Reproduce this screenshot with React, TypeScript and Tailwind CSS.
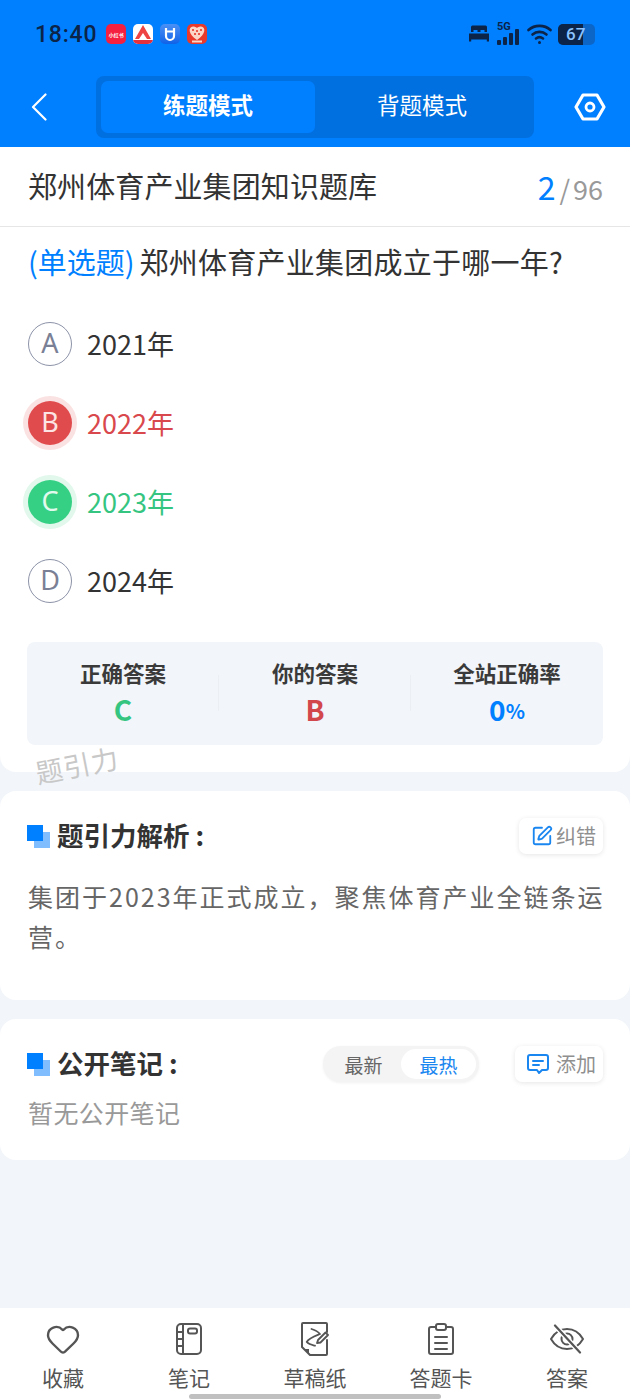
import React from 'react'
import { Heart, SquarePen } from 'lucide-react'

const FONT = "font-['Noto_Sans_CJK_SC','Noto_Sans',sans-serif]"

const AppBadge: React.FC<{ className: string; children: React.ReactNode }> = ({ className, children }) => (
    <div className={`w-5 h-5 rounded-[5px] flex items-center justify-center overflow-hidden ${className}`}>{children}</div>
)

const StatusBar: React.FC = () => (
    <div className="h-[68px] flex items-start justify-between pl-[35px] pr-[35px] pt-[20px]">
        <div className="flex items-center gap-[9px] h-[28px]">
            <span className="text-[23px] leading-none font-['Roboto',sans-serif] font-medium text-[#0b2448] tracking-[0.8px]">18:40</span>
            <div className="flex items-center gap-[7px]">
                <AppBadge className="bg-[#f5203f]">
                    <span className="text-[5px] leading-none text-white font-bold whitespace-nowrap">小红书</span>
                </AppBadge>
                <AppBadge className="bg-white">
                    <svg width="20" height="20" viewBox="0 0 20 20">
                        <path d="M10 1 L18 15 L14 15 L10 9 L6 15 L2 15 Z" fill="#ef4444" />
                        <rect x="0" y="16" width="20" height="4" fill="#e5313c" />
                    </svg>
                </AppBadge>
                <AppBadge className="bg-linear-to-b from-[#4a90f5] to-[#0f62e8]">
                    <svg width="20" height="20" viewBox="0 0 20 20" fill="none" stroke="white" strokeWidth="2.2">
                        <path d="M6 4 V12 A4 4 0 0 0 14 12 V4" />
                        <path d="M6 7.5 H14" />
                    </svg>
                </AppBadge>
                <AppBadge className="bg-[#e8392b]">
                    <svg width="20" height="20" viewBox="0 0 20 20">
                        <path d="M10 16 C1 10 1 3 6 2.5 C8.3 2.3 10 4 10 4 C10 4 11.7 2.3 14 2.5 C19 3 19 10 10 16 Z" fill="#fbd5c5" />
                        <circle cx="6" cy="6" r="1.1" fill="#e8392b" />
                        <circle cx="10" cy="7" r="1.1" fill="#e8392b" />
                        <circle cx="14" cy="6" r="1.1" fill="#e8392b" />
                        <circle cx="8" cy="10" r="1.1" fill="#e8392b" />
                        <circle cx="12" cy="10" r="1.1" fill="#e8392b" />
                        <rect x="5" y="16.5" width="10" height="2" fill="#fbd5c5" />
                    </svg>
                </AppBadge>
            </div>
        </div>
        <div className="flex items-center h-[28px]">
            <svg width="22" height="20" viewBox="0 0 22 20" fill="#0b2448">
                <path d="M3 3 a1.5 1.5 0 0 1 1.5 -1.5 h13 a1.5 1.5 0 0 1 1.5 1.5 v5 h-2.5 v-2 h-4 v2 h-3 v-2 h-4 v2 h-2.5 Z" />
                <path d="M1 9.5 h20 v8 h-2.2 v-2 h-15.6 v2 h-2.2 Z" />
            </svg>
            <div className="relative ml-[7px] w-[24px] h-[22px]">
                <span className="absolute left-0 top-[-2px] text-[11px] leading-none font-bold text-[#0b2448] font-['Roboto',sans-serif]">5G</span>
                <div className="absolute left-0 bottom-0 flex items-end gap-[2px]">
                    <div className="w-[4px] h-[5px] bg-[#0b2448] rounded-[1px]" />
                    <div className="w-[4px] h-[8px] bg-[#0b2448] rounded-[1px]" />
                    <div className="w-[4px] h-[12px] bg-[#0b2448] rounded-[1px]" />
                    <div className="w-[4px] h-[16px] bg-[#0b2448] rounded-[1px]" />
                </div>
            </div>
            <svg className="ml-[6px]" width="25" height="22" viewBox="0 0 25 22" fill="none" stroke="#0b2448" strokeWidth="2.6" strokeLinecap="round">
                <path d="M1.5 7 C7.5 1.5 17.5 1.5 23.5 7" />
                <path d="M5.5 11.5 C9.5 8 15.5 8 19.5 11.5" />
                <path d="M9 15.5 C11 14 14 14 16 15.5" />
                <circle cx="12.5" cy="19.5" r="1.5" fill="#0b2448" stroke="none" />
            </svg>
            <div className="relative ml-[6px] w-[37px] h-[21px] rounded-[5px] bg-[#0b66c8] overflow-hidden">
                <div className="h-full w-[25px] bg-[#0b2448]" />
                <span className="absolute left-[8px] top-0 h-full flex items-center text-[17px] leading-none font-['Roboto',sans-serif] font-medium text-[#8cc4ff]">67</span>
            </div>
        </div>
    </div>
)

const NavBar: React.FC = () => (
    <div className="h-[79px] flex items-start pl-[31px] pr-[24px] pt-[8px]">
        <div className="h-[62px] w-[16px] flex items-center">
            <svg width="16" height="28" viewBox="0 0 16 28" fill="none" stroke="white" strokeWidth="2.2" strokeLinecap="round" strokeLinejoin="round">
                <path d="M14.5 1.5 L2 14 L14.5 26.5" />
            </svg>
        </div>
        <div className="ml-[49px] w-[438px] h-[62px] rounded-[8px] bg-[#0070e0] flex p-[5px]">
            <div className="w-[214px] pb-[4px] rounded-[7px] bg-[#007fff] flex items-center justify-center text-[22.5px] font-bold text-white">练题模式</div>
            <div className="flex-1 pb-[4px] flex items-center justify-center text-[22.5px] text-white">背题模式</div>
        </div>
        <div className="ml-auto h-[62px] flex items-center">
            <svg width="32" height="28" viewBox="0 0 32 28" fill="none" stroke="white" strokeWidth="3.2" strokeLinejoin="round">
                <path d="M9 2 H23 L30 14 L23 26 H9 L2 14 Z" />
                <circle cx="16" cy="14" r="4" strokeWidth="2.8" />
            </svg>
        </div>
    </div>
)

const Option: React.FC<{ letter: string; text: string; variant?: 'wrong' | 'right' }> = ({ letter, text, variant }) => {
    const circle =
        variant === 'wrong'
            ? 'bg-[#e04c4e] text-[#fde4e4] ring-[5px] ring-[#fbe2e2] border-0'
            : variant === 'right'
              ? 'bg-[#35d084] text-[#e2faee] ring-[5px] ring-[#e2f8ec] border-0'
              : 'border border-[#8d93a8] text-[#7a8095]'
    const label = variant === 'wrong' ? 'text-[#d9484c]' : variant === 'right' ? 'text-[#35c581]' : 'text-[#333333]'
    return (
        <div className="flex items-center h-[45px] gap-[15px]">
            <div className={`w-[44px] h-[44px] rounded-full flex items-center justify-center text-[27px] font-['Noto_Sans',sans-serif] ${circle}`}>{letter}</div>
            <span className={`text-[27px] leading-none ${label}`}>{text}</span>
        </div>
    )
}

const Stat: React.FC<{ title: string; children: React.ReactNode; divider?: boolean }> = ({ title, children, divider }) => (
    <div className="flex-1 flex flex-col items-center relative">
        <span className="text-[21.5px] leading-[30px] font-bold text-[#3a3a3a]">{title}</span>
        <div className="h-[42px] flex items-center">{children}</div>
        {divider && <div className="absolute right-0 top-[17px] h-[36px] w-px bg-[#ebeef2]" />}
    </div>
)

const SectionMark: React.FC = () => (
    <div className="relative w-[23px] h-[23px] shrink-0 -ml-px">
        <div className="absolute right-0 bottom-0 w-[16px] h-[16px] bg-[#7fbdff]" />
        <div className="absolute left-0 top-0 w-[16px] h-[16px] bg-[#007fff]" />
    </div>
)

const SectionTitle: React.FC<{ text: string }> = ({ text }) => (
    <span className="ml-[7px] -mt-[3px] text-[26.5px] leading-[36px] font-bold text-[#333333]">
        {text}
        <span className="ml-[6px]">:</span>
    </span>
)

const MiniButton: React.FC<{ icon: React.ReactNode; label: string; className: string }> = ({ icon, label, className }) => (
    <div className={`h-[36px] pl-[12px] rounded-[7px] bg-white shadow-[0_1px_5px_rgba(0,0,0,0.1)] flex items-center ${className}`}>
        {icon}
        <span className="text-[20px] leading-none text-[#8f8f8f]">{label}</span>
    </div>
)

const NotebookIcon = () => (
    <svg width="28" height="34" viewBox="0 0 28 34" fill="none" stroke="#555555" strokeWidth="2" strokeLinejoin="round">
        <rect x="2" y="2" width="24" height="30" rx="4" />
        <path d="M8 2 V32 M2 10 H8 M2 17 H8 M2 24 H8" />
        <rect x="13" y="6.5" width="9" height="5" rx="2" />
    </svg>
)

const DraftIcon = () => (
    <svg width="28" height="34" viewBox="0 0 28 34" fill="none" stroke="#555555" strokeWidth="2" strokeLinejoin="round" strokeLinecap="round">
        <path d="M26 10 V2 a1 1 0 0 0 -1 -1 H2 a1 1 0 0 0 -1 1 V25 L9 33 H25 a1 1 0 0 0 1 -1 V18" />
        <path d="M3 27 H8 V32 Z" fill="#555555" stroke="none" />
        <path d="M10.5 7 C14 8 17 9.5 19 12 C14 14 8 16 5.7 20 C8 22.5 11 23 14 23.7" strokeWidth="1.8" />
        <path d="M16 21 L17 18 L24.5 10.5 L27 13 L19.5 20.5 Z" fill="white" strokeWidth="1.8" />
    </svg>
)

const CardIcon = () => (
    <svg width="28" height="34" viewBox="0 0 28 34" fill="none" stroke="#555555" strokeWidth="2" strokeLinejoin="round" strokeLinecap="round">
        <path d="M8 5 H4 a2 2 0 0 0 -2 2 V30 a2 2 0 0 0 2 2 H24 a2 2 0 0 0 2 -2 V7 a2 2 0 0 0 -2 -2 H20" />
        <rect x="9" y="2" width="10" height="6" rx="2" />
        <path d="M8 15 H20 M8 21 H20 M8 27 H20" />
    </svg>
)

const EyeSlashIcon = () => (
    <svg width="36" height="30" viewBox="0 0 36 30" fill="none" stroke="#555555" strokeWidth="2" strokeLinecap="round" strokeLinejoin="round">
        <path d="M2 15 C6 8 11 5 18 5 C25 5 30 8 34 15 C30 22 25 25 18 25 C11 25 6 22 2 15 Z" />
        <circle cx="18" cy="15" r="5.5" />
        <path d="M6 1.5 L31 28.5" stroke="white" strokeWidth="5" />
        <path d="M6 1.5 L31 28.5" strokeWidth="2.2" />
    </svg>
)

const TabItem: React.FC<{ icon: React.ReactNode; label: string }> = ({ icon, label }) => (
    <div className="flex-1 flex flex-col items-center">
        <div className="h-[40px] flex items-center justify-center">{icon}</div>
        <span className="mt-[3px] text-[21px] leading-[30px] text-[#555555] whitespace-nowrap">{label}</span>
    </div>
)

const App: React.FC = () => {
    return (
        <div className={`relative w-[630px] h-[1400px] overflow-hidden bg-[#f2f5f9] flex flex-col ${FONT}`}>
            <div className="bg-[#007fff] shrink-0">
                <StatusBar />
                <NavBar />
            </div>

            <div className="relative bg-white rounded-b-[16px] h-[625px] shrink-0">
                <div className="h-[80px] pb-[2px] border-b border-[#e6e6e6] flex items-center justify-between pl-[28px] pr-[27px]">
                    <span className="text-[29px] tracking-[0.1px] text-[#333333] leading-none">郑州体育产业集团知识题库</span>
                    <div className="flex items-baseline">
                        <span className="text-[32px] leading-none text-[#007fff]">2</span>
                        <span className="text-[27px] leading-none text-[#999999] ml-[4px]">/</span>
                        <span className="text-[27px] leading-none text-[#999999] ml-[3px]">96</span>
                    </div>
                </div>

                <div className="pl-[28px] pr-[27px] pt-[15px] text-[29px] leading-[38px] text-[#333333] whitespace-nowrap">
                    <span className="text-[#007fff]">(单选题)</span>
                    <span className="ml-[5px] tracking-[0.25px]">郑州体育产业集团成立于哪一年?</span>
                </div>

                <div className="pl-[28px] pt-[41px] flex flex-col gap-[34px]">
                    <Option letter="A" text="2021年" />
                    <Option letter="B" text="2022年" variant="wrong" />
                    <Option letter="C" text="2023年" variant="right" />
                    <Option letter="D" text="2024年" />
                </div>

                <div className="mx-[27px] mt-[39px] h-[103px] rounded-[8px] bg-[#f2f5f9] flex pt-[16px]">
                    <Stat title="正确答案" divider>
                        <span className="text-[28px] font-bold leading-none text-[#35c581]">C</span>
                    </Stat>
                    <Stat title="你的答案" divider>
                        <span className="text-[28px] font-bold leading-none text-[#d2474b]">B</span>
                    </Stat>
                    <Stat title="全站正确率">
                        <span className="text-[28px] font-bold leading-none text-[#007fff]">0</span>
                        <span className="text-[20px] font-bold leading-none text-[#007fff] mt-[3px]">%</span>
                    </Stat>
                </div>

                <span className="absolute left-[35px] top-[604px] -rotate-[11deg] text-[27px] leading-none text-[#c8c8c8] tracking-[1px]">题引力</span>
            </div>

            <div className="mt-[19px] bg-white rounded-[16px] h-[209px] shrink-0 pl-[28px] pr-[27px] pt-[27px]">
                <div className="flex items-center justify-between">
                    <div className="flex items-center">
                        <SectionMark />
                        <SectionTitle text="题引力解析" />
                    </div>
                    <MiniButton className="w-[84px] gap-[3px]" icon={<SquarePen size={22} strokeWidth={2} className="text-[#1a86f0]" />} label="纠错" />
                </div>
                <p className="mt-[22px] -mr-[4px] text-[25px] leading-[40px] tracking-[2px] text-[#666666]">集团于2023年正式成立，聚焦体育产业全链条运营。</p>
            </div>

            <div className="mt-[19px] bg-white rounded-[16px] h-[141px] shrink-0 pl-[28px] pr-[27px] pt-[27px]">
                <div className="flex items-center h-[36px]">
                    <SectionMark />
                    <SectionTitle text="公开笔记" />
                    <div className="ml-auto w-[156px] h-[36px] rounded-full bg-[#f4f4f4] shadow-[0_1px_3px_rgba(0,0,0,0.06)] flex items-center p-[3px] text-[19px] leading-none">
                        <span className="w-[75px] text-center text-[#666666]">最新</span>
                        <span className="flex-1 h-full rounded-full bg-white flex items-center justify-center text-[#1a86f0]">最热</span>
                    </div>
                    <div className="ml-[36px]">
                        <MiniButton
                            className="w-[88px] gap-[7px]"
                            icon={
                                <svg width="22" height="22" viewBox="0 0 22 22" fill="none" stroke="#1a86f0" strokeWidth="2" strokeLinejoin="round" strokeLinecap="round">
                                    <path d="M3 2 H19 a2 2 0 0 1 2 2 V15 a2 2 0 0 1 -2 2 H15 L12 20 L10 17 H3 a2 2 0 0 1 -2 -2 V4 a2 2 0 0 1 2 -2 Z" />
                                    <path d="M6 8 H16 M6 12 H12" />
                                </svg>
                            }
                            label="添加"
                        />
                    </div>
                </div>
                <p className="mt-[12px] text-[25px] leading-[36px] tracking-[0.4px] text-[#999999]">暂无公开笔记</p>
            </div>

            <div className="mt-auto relative h-[92px] bg-white flex pt-[11px]">
                <TabItem icon={<Heart size={36} strokeWidth={1.6} className="text-[#555555]" />} label="收藏" />
                <TabItem icon={<NotebookIcon />} label="笔记" />
                <TabItem icon={<DraftIcon />} label="草稿纸" />
                <TabItem icon={<CardIcon />} label="答题卡" />
                <TabItem icon={<EyeSlashIcon />} label="答案" />
                <div className="absolute left-[189px] bottom-[1px] w-[252px] h-[5px] rounded-full bg-[#c0c0c0]" />
            </div>
        </div>
    )
}

export default App
